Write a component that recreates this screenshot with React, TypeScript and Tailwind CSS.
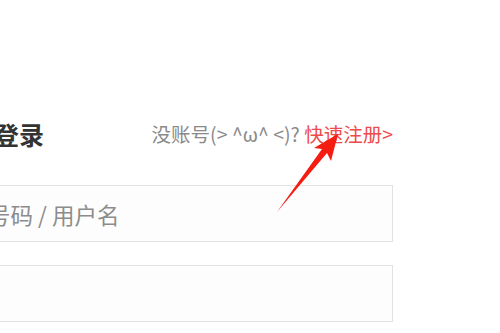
import React from "react";

const cjk = { fontFamily: '"Noto Sans CJK SC", "Noto Sans", sans-serif' };

export default function App() {
  return (
    <div className="relative h-[333px] w-[500px] overflow-hidden bg-white" style={cjk}>
      {/* login form, shifted so its left side is off screen */}
      <div className="-ml-[70px] w-[463px] pt-[114px]">
        <div className="flex h-[40px] items-center justify-between">
          <h2 className="ml-[64px] text-[25px] font-bold leading-none text-[#333]">登录</h2>
          <p className="text-[19.5px] leading-none text-[#8a8a8a]">
            没账号(&gt; ^ω^ &lt;)?{" "}
            <a className="text-[#ee4b4b]" href="#">
              快速注册&gt;
            </a>
          </p>
        </div>
        <div className="mt-[31px] flex flex-col gap-[23px]">
          <input
            className="h-[57px] w-full border border-[#e2e2e2] bg-[#fdfdfd] pl-[12px] text-[22.5px] outline-none placeholder:text-[#8c8c8c]"
            placeholder="手机号码 / 用户名"
          />
          <input
            type="password"
            className="h-[57px] w-full border border-[#e2e2e2] bg-[#fdfdfd] pl-[12px] text-[22.5px] outline-none"
          />
        </div>
      </div>

      {/* red annotation arrow */}
      <svg className="pointer-events-none absolute left-0 top-0" width="500" height="333">
        <polygon
          points="277,212 327,153 331,161 338,134 314,148 322,149"
          fill="#f51d12"
        />
      </svg>
    </div>
  );
}
